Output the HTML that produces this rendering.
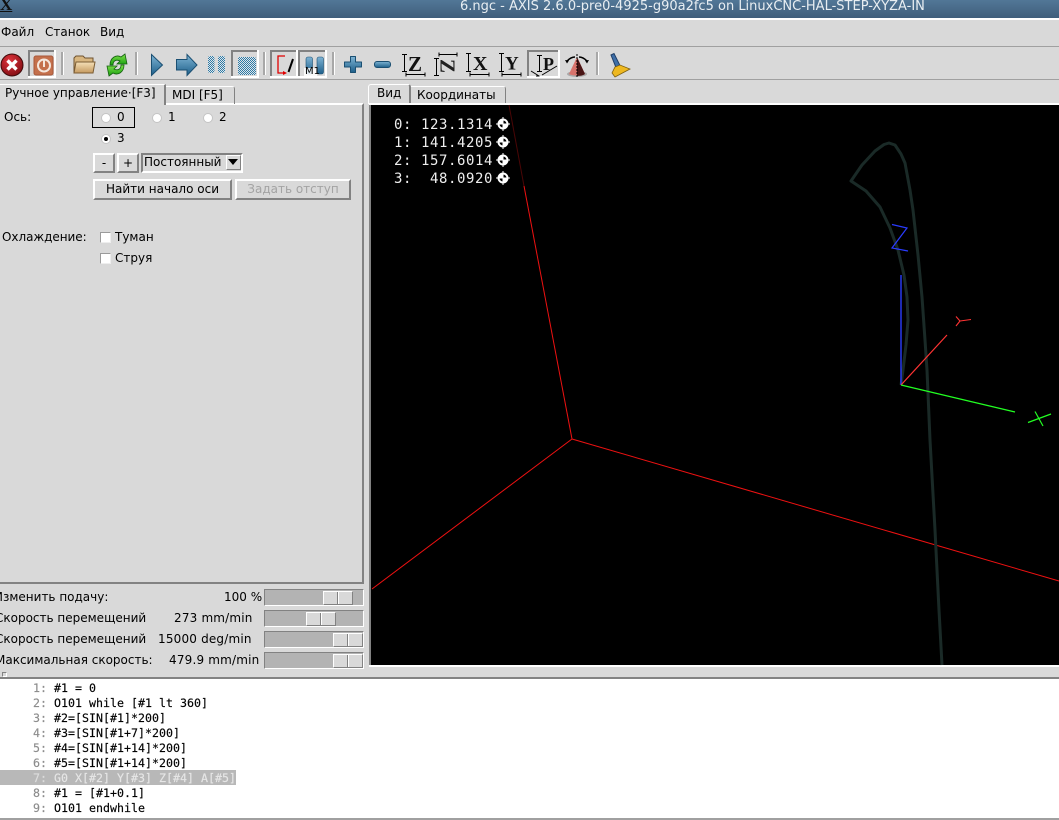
<!DOCTYPE html>
<html><head><meta charset="utf-8"><style>
html,body{margin:0;padding:0;background:#d9d9d9}
body{position:relative;width:1059px;height:820px;overflow:hidden;font-family:"DejaVu Sans","Liberation Sans",sans-serif;font-size:12px;color:#000}
.a{position:absolute;white-space:pre;line-height:15px}
.b{position:absolute;box-sizing:border-box}
.btn{position:absolute;box-sizing:border-box;border:2px solid;border-color:#fff #828282 #828282 #fff;text-align:center;background:#d9d9d9;line-height:16px;white-space:pre}
.sl{position:absolute;box-sizing:border-box;left:264px;width:100px;height:17px;background:#b3b3b3;border:1px solid;border-color:#828282 #fff #fff #828282}
.th{position:absolute;top:1px;height:14px;width:30px;box-sizing:border-box;background:#d9d9d9;border:1px solid;border-color:#fff #828282 #828282 #fff}
.th:after{content:"";position:absolute;left:13px;top:0;width:1px;height:12px;background:#828282;box-shadow:1px 0 #fff}
.r{position:absolute;width:10px;height:10px;border-radius:50%;background:#fff;border:1px solid #c4c4c4;box-sizing:border-box}
.c{position:absolute;width:11px;height:11px;background:#fff;border:1px solid;border-color:#9a9a9a #eee #eee #9a9a9a;box-sizing:border-box}
.sep{position:absolute;top:52px;width:2px;height:23px;background:#a8a8a8;box-shadow:1px 0 #fff}
.code{font-family:"DejaVu Sans Mono","Liberation Mono",monospace;font-size:11.63px;line-height:15px;-webkit-text-stroke:.15px currentColor}
.crd{position:absolute;left:394px;font-family:"DejaVu Sans Mono",monospace;font-size:14px;letter-spacing:.57px;color:#eee;line-height:18px;white-space:pre}
.sb{letter-spacing:.18px}
svg{position:absolute;overflow:visible}
svg text{font-family:"Liberation Serif",serif;font-weight:bold}
</style></head><body>

<!-- title bar -->
<div class="b" style="left:0;top:0;width:1059px;height:18px;background:linear-gradient(#527797,#3f5e7b)"></div>
<div class="b" style="left:0;top:18px;width:1059px;height:2px;background:#fff"></div>
<div class="a" style="left:0;top:-4px;font:bold 17px 'Liberation Serif',serif;line-height:18px;text-decoration:underline;color:#111">X</div>
<div class="a" style="left:460px;top:-1px;color:#e8eef2;font-size:13px">6.ngc - AXIS 2.6.0-pre0-4925-g90a2fc5 on LinuxCNC-HAL-STEP-XYZA-IN</div>

<!-- menu -->
<div class="a" style="left:1px;top:25px">Файл</div>
<div class="a" style="left:45px;top:25px">Станок</div>
<div class="a" style="left:100px;top:25px">Вид</div>
<div class="b" style="left:0;top:46px;width:1059px;height:1px;background:#a0a0a0"></div>
<div class="b" style="left:0;top:79px;width:1059px;height:1px;background:#a0a0a0"></div>

<!-- toolbar -->
<svg style="left:0;top:0" width="1059" height="82" viewBox="0 0 1059 82">
 <defs>
  <linearGradient id="bl" x1="0" y1="0" x2="0" y2="1"><stop offset="0" stop-color="#7fb4d4"/><stop offset="1" stop-color="#1d5f8a"/></linearGradient>
  <linearGradient id="fo" x1="0" y1="0" x2="0" y2="1"><stop offset="0" stop-color="#f5e0b8"/><stop offset="1" stop-color="#c59a60"/></linearGradient>
  <radialGradient id="rd" cx=".4" cy=".3" r=".8"><stop offset="0" stop-color="#e0343c"/><stop offset="1" stop-color="#7a0a10"/></radialGradient>
  <linearGradient id="gr" x1="0" y1="0" x2="0" y2="1"><stop offset="0" stop-color="#7fe04a"/><stop offset="1" stop-color="#18a010"/></linearGradient>
  <pattern id="ck" width="2" height="2" patternUnits="userSpaceOnUse"><rect width="2" height="2" fill="#dfe6ea"/><rect width="1" height="1" fill="#2f7aa5"/><rect x="1" y="1" width="1" height="1" fill="#2f7aa5"/></pattern>
 </defs>
 <!-- stop -->
 <circle cx="12" cy="65" r="11" fill="url(#rd)" stroke="#3e0a0a"/>
 <path d="M7.500 60.500L16.500 69.500M16.500 60.500L7.500 69.500" stroke="#fff" stroke-width="3.4"/>
 <!-- pressed frames -->
 <g fill="none" stroke-width="2">
  <path d="M29 78V51H55" stroke="#828282"/><path d="M55 50V77H28" stroke="#fff"/>
  <path d="M232 78V51H258" stroke="#828282"/><path d="M258 50V77H231" stroke="#fff"/>
  <path d="M271 78V51H297" stroke="#828282"/><path d="M297 50V77H270" stroke="#fff"/>
  <path d="M299 78V51H326" stroke="#828282"/><path d="M326 50V77H298" stroke="#fff"/>
  <path d="M528 78V51H559" stroke="#828282"/><path d="M559 50V77H527" stroke="#fff"/>
 </g>
 <!-- power -->
 <rect x="34" y="56" width="19" height="19" rx="2" fill="#c4704c" stroke="#a8583a"/>
 <circle cx="44" cy="65.500" r="6" fill="none" stroke="#f4e6dc" stroke-width="2"/><path d="M44 60V67" stroke="#f4e6dc" stroke-width="2"/>
 <!-- open -->
 <path d="M74 72V58l2-2h7l2 2h8v6z" fill="#d8b680" stroke="#6e5230"/>
 <path d="M74 73l2-11h19l-2 11z" fill="url(#fo)" stroke="#7a5c34"/>
 <!-- reload -->
 <path d="M110 65C110 58 116 54 121 57L125 54L127 64L117 64L120 61C116 59 113 61 113 65Z" fill="url(#gr)" stroke="#146010" stroke-width=".8"/>
 <path d="M124 65C124 72 118 76 113 73L109 76L107 66L117 66L114 69C118 71 121 69 121 65Z" fill="url(#gr)" stroke="#146010" stroke-width=".8"/>
 <!-- run, step -->
 <path d="M151.500 54.500l11 10.500-11 10.500z" fill="url(#bl)" stroke="#1a4f72"/>
 <path d="M176.500 59.500h10.500v-5l10 10.500-10 10.500v-5.500h-10.500z" fill="url(#bl)" stroke="#1a4f72"/>
 <!-- pause -->
 <rect x="208" y="56" width="6.500" height="17" rx="2" fill="url(#ck)"/><rect x="218" y="56" width="7" height="17" rx="2" fill="url(#ck)"/>
 <!-- stop program -->
 <rect x="238" y="57" width="18" height="18" rx="2" fill="url(#ck)"/>
 <!-- skip lines -->
 <path d="M285 56H278V73H284" fill="none" stroke="#e00000" stroke-width="1.3"/><path d="M283 71l4 2-4 2z" fill="#e00000"/>
 <path d="M288.500 72l4.500-13" stroke="#000" stroke-width="2"/>
 <!-- M1 -->
 <rect x="306" y="57" width="6.500" height="17" rx="2" fill="url(#bl)" stroke="#1a4f72" stroke-width=".6"/><rect x="317" y="57" width="6.500" height="17" rx="2" fill="url(#bl)" stroke="#1a4f72" stroke-width=".6"/>
 <rect x="304" y="68" width="13" height="8" fill="#fff" opacity=".85"/>
 <!-- plus, minus -->
 <path d="M350.500 56.500h5v5.500h6v5h-6v5.500h-5v-5.500h-6v-5h6z" fill="url(#bl)" stroke="#1a4f72" stroke-linejoin="round"/>
 <rect x="374.500" y="61.500" width="16" height="6" rx="2.500" fill="url(#bl)" stroke="#1a4f72"/>
 <!-- view brackets -->
 <g fill="none" stroke="#000" stroke-width="1">
  <path d="M404.500 54V71M402 54.500h5M402 71.500h5M406 74.500h19M406 72.500v4M425 72.500v4"/>
  <path d="M436.500 58V75M434 58.500h5M434 75.500h5M439 54.500h18M439 52.500v4M457 52.500v4"/>
  <path d="M468.500 53V71M466 53.500h5M466 71.500h5M470 74.500h19M470 72.500v4M489 72.500v4"/>
  <path d="M501.500 53V71M499 53.500h5M499 71.500h5M502 74.500h19M502 72.500v4M521 72.500v4"/>
  <path d="M539.500 55V71M537 55.500h5M537 71.500h5M531 71l8 5M536 76h3.500M542 75l15-9"/>
 </g>
 <text x="408" y="71" font-size="21" fill="#111">Z</text>
 <text x="447.500" y="73" font-size="21" fill="#222" text-anchor="middle" transform="rotate(90 447.500 66)">Z</text>
 <text x="473" y="70" font-size="20" fill="#111">X</text>
 <text x="505" y="69.500" font-size="19" fill="#111">Y</text>
 <text x="543" y="70" font-size="18" fill="#111">P</text>
 <!-- rotate cone -->
 <ellipse cx="577" cy="74" rx="10" ry="3" fill="#8a8a8a" opacity=".6"/>
 <path d="M577 57l8 17c-3 2-13 2-16 0z" fill="#d8736c"/><path d="M577 57l8 17c-2 1.500-5 2-8 2z" fill="#4a1515"/>
 <path d="M567 61c3-3 6-4 8-4M587 61c-3-3-6-4-8-4" fill="none" stroke="#000" stroke-width="1.500"/>
 <path d="M565 60l4 .5-2 3zM589 60l-4 .5 2 3z" fill="#000"/>
 <path d="M577 54V78" stroke="#000" stroke-dasharray="2 1"/>
 <!-- clear broom -->
 <path d="M611 55l3-1.500 6 12-4 2z" fill="#3f6fa8" stroke="#1f3f68"/>
 <path d="M615 67l5-2 10 4-15 8-3-4z" fill="#eeb820" stroke="#7d5f10" stroke-width=".8"/>
</svg>
<div class="a" style="left:305px;top:67px;font-size:10px;line-height:10px">M1</div>
<div class="sep" style="left:61px"></div><div class="sep" style="left:135px"></div><div class="sep" style="left:263px"></div><div class="sep" style="left:332px"></div><div class="sep" style="left:596px"></div>

<!-- left tabs -->
<div class="b" style="left:0;top:103px;width:364px;height:481px;border:solid #828282;border-width:0 2px 2px 0;border-top:2px solid #fff"></div>
<div class="b" style="left:0;top:84px;width:166px;height:21px;background:#d9d9d9;border-top:1px solid #fff;border-right:2px solid #828282"></div>
<div class="a" style="left:5px;top:86px">Ручное управление·[F3]</div>
<div class="b" style="left:166px;top:86px;width:69px;height:18px;border-top:1px solid #fff;border-right:1px solid #828282;border-radius:0 3px 0 0"></div>
<div class="a" style="left:172px;top:88px">MDI [F5]</div>

<!-- right tabs -->
<div class="b" style="left:368px;top:84px;width:43px;height:20px;background:#d9d9d9;border-top:1px solid #fff;border-left:1px solid #fff;border-right:2px solid #828282;border-radius:3px 3px 0 0"></div>
<div class="a" style="left:377px;top:86px">Вид</div>
<div class="b" style="left:411px;top:86px;width:95px;height:18px;border-top:1px solid #fff;border-right:1px solid #828282;border-radius:0 3px 0 0"></div>
<div class="a" style="left:417px;top:88px">Координаты</div>

<!-- axis controls -->
<div class="a" style="left:4px;top:110px">Ось:</div>
<div class="b" style="left:92px;top:107px;width:43px;height:21px;border:1px solid #000"></div>
<div class="r" style="left:101px;top:113px"></div><div class="a" style="left:117px;top:110px">0</div>
<div class="r" style="left:152px;top:113px"></div><div class="a" style="left:168px;top:110px">1</div>
<div class="r" style="left:203px;top:113px"></div><div class="a" style="left:219px;top:110px">2</div>
<div class="r" style="left:101px;top:134px"></div><div class="b" style="left:104px;top:137px;width:4px;height:4px;border-radius:50%;background:#000"></div><div class="a" style="left:117px;top:131px">3</div>

<div class="btn" style="left:93px;top:153px;width:22px;height:20px">-</div>
<div class="btn" style="left:117px;top:153px;width:22px;height:20px">+</div>
<div class="b" style="left:141px;top:153px;width:102px;height:20px;background:#d9d9d9;border:2px solid;border-color:#828282 #fff #fff #828282"></div>
<div class="a" style="left:144px;top:155px">Постоянный</div>
<div class="b" style="left:226px;top:155px;width:15px;height:15px;background:#d9d9d9;border:1px solid;border-color:#fff #828282 #828282 #fff"></div>
<svg style="left:228px;top:159px" width="11" height="7"><path d="M0 0h10l-5 6z" fill="#000"/></svg>

<div class="btn" style="left:93px;top:179px;width:139px;height:21px">Найти начало оси</div>
<div class="btn" style="left:235px;top:179px;width:116px;height:21px;color:#a3a3a3">Задать отступ</div>

<div class="a" style="left:2px;top:230px;letter-spacing:-.05px">Охлаждение:</div>
<div class="c" style="left:100px;top:232px"></div><div class="a" style="left:115px;top:230px">Туман</div>
<div class="c" style="left:100px;top:253px"></div><div class="a" style="left:115px;top:251px">Струя</div>

<!-- sliders -->
<div class="a" style="left:-6px;top:590px">Изменить подачу:</div>
<div class="a" style="left:224px;top:590px">100 %</div>
<div class="sl" style="top:589px"><div class="th" style="left:58px"></div></div>
<div class="a" style="left:-5px;top:611px">Скорость перемещений</div>
<div class="a sb" style="left:174px;top:611px">273 mm/min</div>
<div class="sl" style="top:610px"><div class="th" style="left:41px"></div></div>
<div class="a" style="left:-5px;top:632px">Скорость перемещений</div>
<div class="a sb" style="left:158px;top:632px">15000 deg/min</div>
<div class="sl" style="top:631px"><div class="th" style="left:68px"></div></div>
<div class="a" style="left:-5px;top:653px">Максимальная скорость:</div>
<div class="a sb" style="left:169px;top:653px">479.9 mm/min</div>
<div class="sl" style="top:652px"><div class="th" style="left:68px"></div></div>
<div class="b" style="left:2px;top:672px;width:5px;height:5px;background:#d9d9d9;border:1px solid;border-color:#828282 #fff #fff #828282"></div>

<!-- GL view -->
<div class="b" style="left:369px;top:103px;width:690px;height:2px;background:#fff"></div>
<div class="b" style="left:369px;top:105px;width:2px;height:562px;background:#828282"></div>
<div class="b" style="left:371px;top:105px;width:688px;height:560px;background:#000"></div>
<div class="b" style="left:369px;top:665px;width:690px;height:2px;background:#fff"></div>
<svg style="left:0;top:0" width="1059" height="820" viewBox="0 0 1059 820">
 <g fill="none">
  <path d="M509 105L524 186" stroke="#4a0606" stroke-width="1"/>
  <path d="M524 186L572 439" stroke="#ee1111" stroke-width="1"/>
  <path d="M572 439L372 589" stroke="#ee1111" stroke-width="1"/>
  <path d="M572 439L1059 581" stroke="#ee1111" stroke-width="1"/>
  <path d="M901 385L903 370L906 345L908 320L907 297L904 275L898 250L890 228L880 207L866 191L851 181L862 165L875 151L884 144.500L889 143L895 145L901 154L905 163L910 190L913 210L918 255L922 297L925 340L927 370L930 440L935 530L939 610L942 665" stroke="#1a2a27" stroke-width="3" stroke-linejoin="round"/>
  <path d="M901 275V385" stroke="#2a3cff" stroke-width="1.400"/>
  <path d="M892 224.500L907 228L892 248L908 251" stroke="#2a3cff" stroke-width="1.200"/>
  <path d="M901 385L947 335" stroke="#ff3333" stroke-width="1.200"/>
  <path d="M956 316.500L960 321L956 326M960 321L971 319.500" stroke="#ff3333" stroke-width="1.100"/>
  <path d="M901 385L1015 412" stroke="#22ff22" stroke-width="1.300"/>
  <path d="M1028 422.500L1051 414M1035 411.500L1043 426" stroke="#22ff22" stroke-width="1.200"/>
 </g>
 <g>
  <g id="d"><circle cx="503" cy="124" r="5.500" fill="#fff"/><path d="M503 124h3.500a3.500 3.500 0 0 0-3.500-3.500zM503 124h-3.500a3.500 3.500 0 0 0 3.500 3.500z" fill="#000"/><path d="M503 117v14M496 124h14" stroke="#fff"/></g>
  <g transform="translate(0,18)"><circle cx="503" cy="124" r="5.500" fill="#fff"/><path d="M503 124h3.500a3.500 3.500 0 0 0-3.500-3.500zM503 124h-3.500a3.500 3.500 0 0 0 3.500 3.500z" fill="#000"/><path d="M503 117v14M496 124h14" stroke="#fff"/></g>
  <g transform="translate(0,36)"><circle cx="503" cy="124" r="5.500" fill="#fff"/><path d="M503 124h3.500a3.500 3.500 0 0 0-3.500-3.500zM503 124h-3.500a3.500 3.500 0 0 0 3.500 3.500z" fill="#000"/><path d="M503 117v14M496 124h14" stroke="#fff"/></g>
  <g transform="translate(0,54)"><circle cx="503" cy="124" r="5.500" fill="#fff"/><path d="M503 124h3.500a3.500 3.500 0 0 0-3.500-3.500zM503 124h-3.500a3.500 3.500 0 0 0 3.500 3.500z" fill="#000"/><path d="M503 117v14M496 124h14" stroke="#fff"/></g>
 </g>
</svg>
<div class="crd" style="top:116px">0: 123.1314</div>
<div class="crd" style="top:134px">1: 141.4205</div>
<div class="crd" style="top:152px">2: 157.6014</div>
<div class="crd" style="top:170px">3:  48.0920</div>

<!-- code -->
<div class="b" style="left:0;top:677px;width:1059px;height:2px;background:#828282"></div>
<div class="b" style="left:0;top:679px;width:1059px;height:139px;background:#fff"></div>
<div class="b" style="left:0;top:770px;width:236px;height:15px;background:#b8b8b8"></div>
<div class="b" style="left:0;top:818px;width:1059px;height:2px;background:#a0a0a0"></div>
<div class="a code" style="left:33px;top:681px;color:#8c8c8c">1:
2:
3:
4:
5:
6:
<span style="color:#ddd">7:</span>
8:
9:</div>
<div class="a code" style="left:54px;top:681px">#1 = 0
O101 while [#1 lt 360]
#2=[SIN[#1]*200]
#3=[SIN[#1+7]*200]
#4=[SIN[#1+14]*200]
#5=[SIN[#1+14]*200]
<span style="color:#e6e6e6">G0 X[#2] Y[#3] Z[#4] A[#5]</span>
#1 = [#1+0.1]
O101 endwhile</div>
</body></html>
